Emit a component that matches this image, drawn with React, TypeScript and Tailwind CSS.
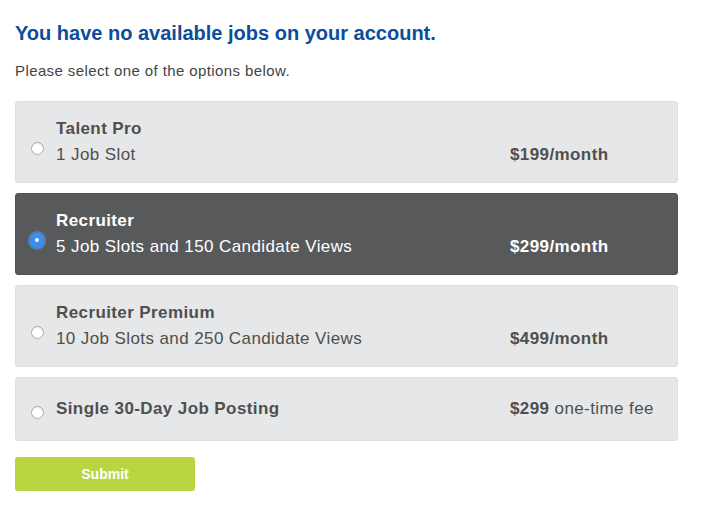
import React from "react";

type Plan = {
  name: string;
  detail?: string;
  price: string;
  suffix?: string;
};

const plans: Plan[] = [
  { name: "Talent Pro", detail: "1 Job Slot", price: "$199/month" },
  { name: "Recruiter", detail: "5 Job Slots and 150 Candidate Views", price: "$299/month" },
  { name: "Recruiter Premium", detail: "10 Job Slots and 250 Candidate Views", price: "$499/month" },
  { name: "Single 30-Day Job Posting", price: "$299", suffix: " one-time fee" },
];

function Radio({ checked }: { checked: boolean }) {
  if (checked) {
    return (
      <span className="flex h-[15px] w-[15px] items-center justify-center rounded-full bg-[#3b8ef0] shadow-[0_0_0_2px_rgba(80,150,240,0.6)]">
        <span className="h-[4px] w-[4px] rounded-full bg-white" />
      </span>
    );
  }
  return (
    <span className="block h-[13px] w-[13px] rounded-full border border-[#a9a9a9] bg-white shadow-[inset_0_1px_1px_rgba(0,0,0,0.08)]" />
  );
}

function PlanCard({ plan, selected }: { plan: Plan; selected: boolean }) {
  const text = selected ? "text-white" : "text-[#4f4f4f]";
  return (
    <label
      className={
        "flex cursor-pointer items-center rounded-[3px] border pl-[14px] " +
        (selected
          ? "border-[#505153] bg-[#58595b] "
          : "border-[#dedfe1] bg-[#e6e7e8] ") +
        (plan.detail ? "py-[14px]" : "py-[18px]")
      }
    >
      <span className={"flex w-[14px] justify-center " + (plan.detail ? "mt-[12px]" : "mt-[6px]")}>
        <Radio checked={selected} />
      </span>
      <div className={"ml-[12px] flex-1 text-[17px] leading-[26px] tracking-[0.4px] " + text}>
        <div className="font-bold">{plan.name}</div>
        {plan.detail && <div>{plan.detail}</div>}
      </div>
      <div className={"w-[167px] self-end text-[17px] leading-[26px] tracking-[0.4px] " + text}>
        <span className="font-bold">{plan.price}</span>
        {plan.suffix}
      </div>
    </label>
  );
}

export default function App() {
  return (
    <div className="min-h-[509px] bg-white px-[15px] pt-[21px] font-['Liberation_Sans',Arial,sans-serif]">
      <h1 className="text-[20px] font-bold leading-[24px] text-[#0b4d9b]">
        You have no available jobs on your account.
      </h1>
      <p className="mt-[16px] text-[15px] leading-[20px] tracking-[0.4px] text-[#444]">
        Please select one of the options below.
      </p>
      <div className="mt-[20px] flex w-[663px] flex-col gap-[10px]">
        {plans.map((p, i) => (
          <PlanCard key={p.name} plan={p} selected={i === 1} />
        ))}
      </div>
      <button className="mt-[16px] h-[34px] w-[180px] rounded-[3px] bg-[#b9d641] text-[14px] font-bold text-white">
        Submit
      </button>
    </div>
  );
}
